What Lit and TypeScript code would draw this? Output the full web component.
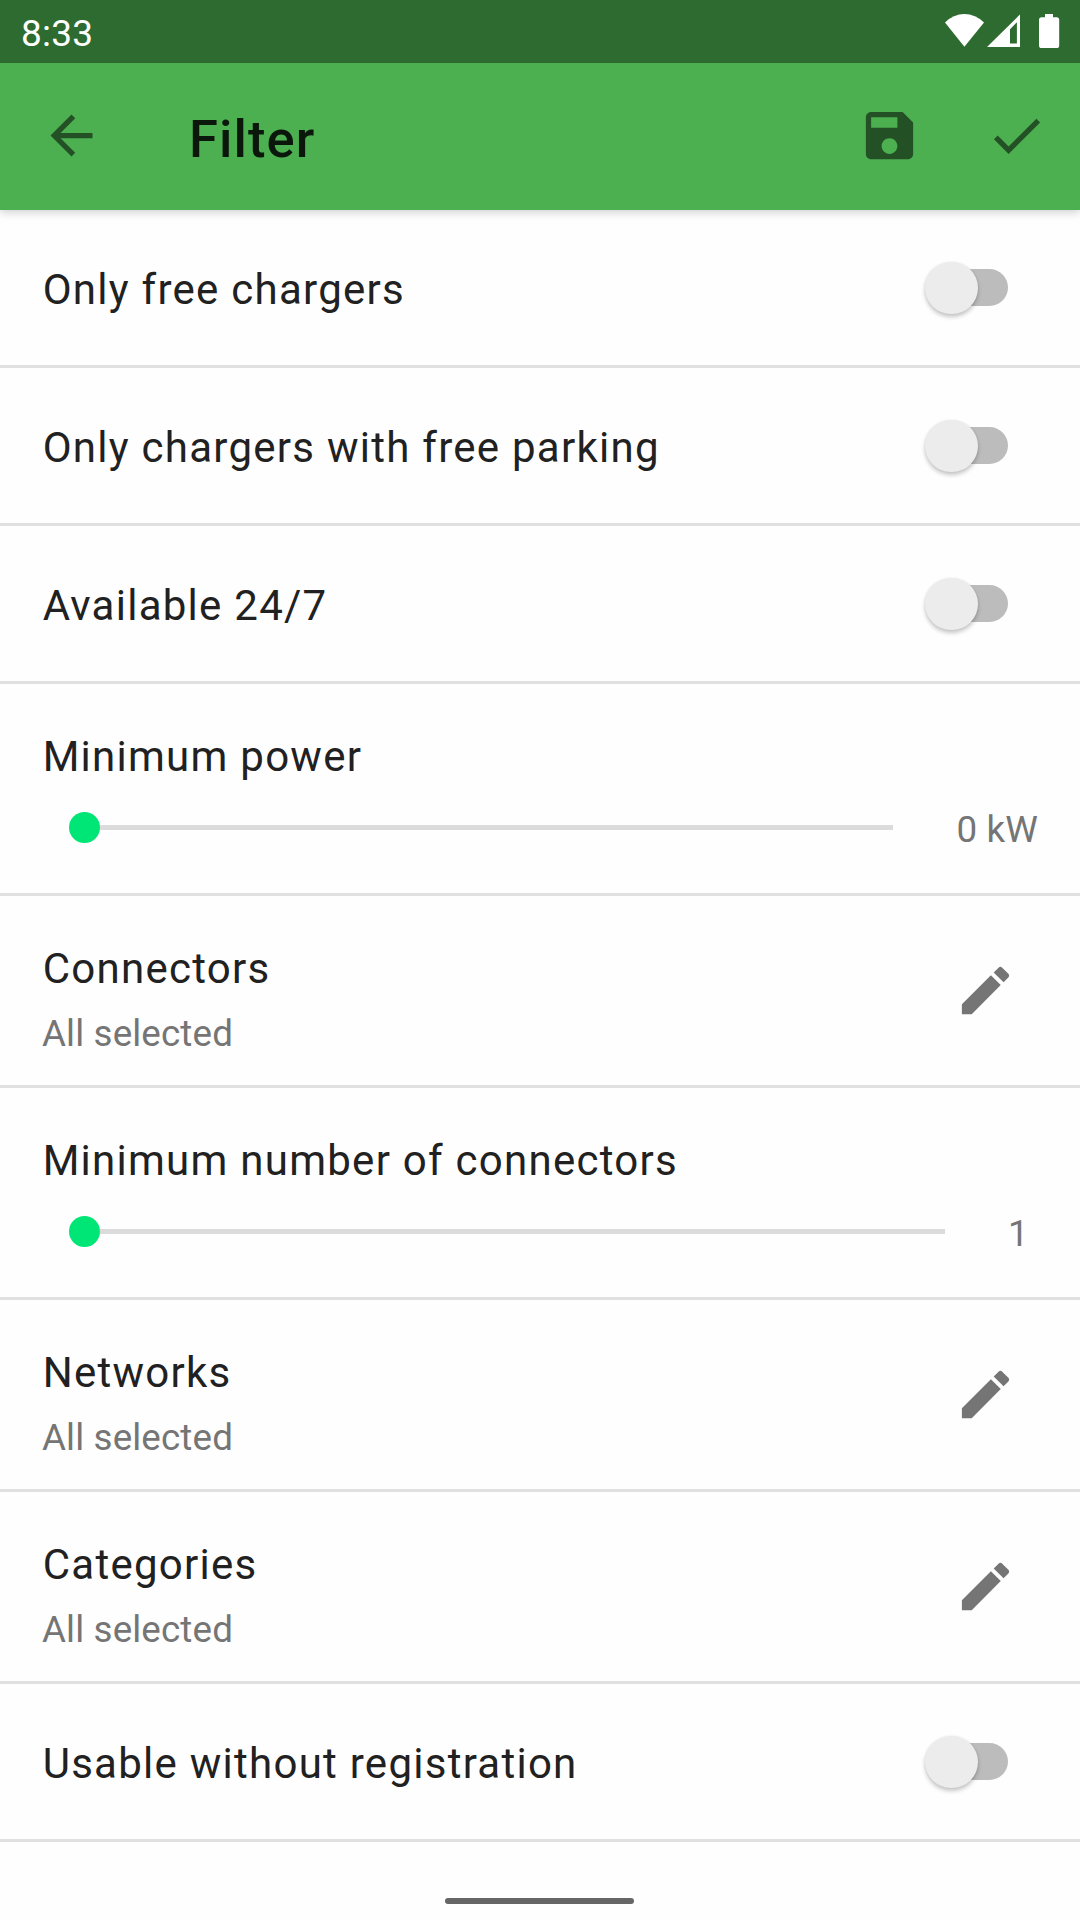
import { LitElement, html, svg, css } from "lit";
import { customElement, property } from "lit/decorators.js";

const ICONS = {
  back: svg`<path d="M20 11H7.83l5.59-5.59L12 4l-8 8 8 8 1.41-1.41L7.83 13H20v-2z"/>`,
  save: svg`<path d="M17 3H5c-1.11 0-2 .9-2 2v14c0 1.1.89 2 2 2h14c1.1 0 2-.9 2-2V7l-4-4zm-5 16c-1.66 0-3-1.34-3-3s1.34-3 3-3 3 1.34 3 3-1.34 3-3 3zm3-10H5V5h10v4z"/>`,
  check: svg`<path d="M9 16.17 4.83 12l-1.42 1.41L9 19 21 7l-1.41-1.41z"/>`,
  edit: svg`<path d="M3 17.25V21h3.75L17.81 9.94l-3.75-3.75L3 17.25zM20.71 7.04c.39-.39.39-1.02 0-1.41l-2.34-2.34c-.39-.39-1.02-.39-1.41 0l-1.83 1.83 3.75 3.75 1.83-1.83z"/>`,
};

@customElement("md-icon")
class MdIcon extends LitElement {
  @property() name: keyof typeof ICONS = "edit";
  static styles = css`
    :host { display: block; flex: none; width: 63px; height: 63px; }
    .icon { display: block; width: 100%; height: 100%; fill: currentColor; }
  `;
  render() {
    return html`<svg class="icon" viewBox="0 0 24 24">${ICONS[this.name]}</svg>`;
  }
}

@customElement("status-bar")
class StatusBar extends LitElement {
  static styles = css`
    :host {
      display: flex; justify-content: space-between; height: 63px;
      box-sizing: border-box; padding-left: 21px;
      background: #2e6b30; color: #fff;
    }
    .time { font-size: 37px; line-height: 67px; letter-spacing: 0.2px; }
    .icons { display: block; width: 140px; height: 63px; fill: #fff; }
  `;
  render() {
    return html`
      <span class="time">8:33</span>
      <svg class="icons" viewBox="940 0 140 63">
        <path d="M945 22.6Q953.4 14.1 964.4 14.1T984 22.6L964.4 46.8Z"/>
        <path fill-rule="evenodd" d="M987 47 1020 14.4V47ZM1010 29.2V43.5H1016.9V22.3Z"/>
        <path d="M1045 14h8v3.2h3.6a2.6 2.6 0 0 1 2.6 2.6V45.4a2.6 2.6 0 0 1-2.6 2.6h-15a2.6 2.6 0 0 1-2.6-2.6V19.8a2.6 2.6 0 0 1 2.6-2.6h3.4z"/>
      </svg>`;
  }
}

@customElement("app-bar")
class AppBar extends LitElement {
  static styles = css`
    :host {
      display: flex; align-items: center; height: 147px; box-sizing: border-box;
      padding: 0 32px 2px 39.7px; background: #4caf50; color: rgba(0, 0, 0, 0.54);
      box-shadow: 0 3px 8px rgba(0, 0, 0, 0.17);
      clip-path: inset(0 0 -16px 0);
    }
    .title {
      flex: 1; margin-left: 86.3px; padding-top: 6px;
      font-size: 52.5px; font-weight: 500; line-height: 62px;
      letter-spacing: 1.1px; color: rgba(0, 0, 0, 0.87);
    }
    .actions { display: flex; gap: 64px; }
  `;
  render() {
    return html`
      <md-icon name="back"></md-icon>
      <span class="title">Filter</span>
      <div class="actions">
        <md-icon name="save"></md-icon>
        <md-icon name="check"></md-icon>
      </div>`;
  }
}

const rowStyles = css`
  :host {
    display: flex; box-sizing: border-box; padding: 0 42px;
    border-bottom: 3px solid #e0e0e0;
  }
  .label {
    font-size: 42px; line-height: 50px; letter-spacing: 1.26px;
    padding-left: 0.7px; color: #212121; white-space: nowrap;
  }
  .minor {
    font-size: 36.75px; line-height: 44px; letter-spacing: 0.14px;
    color: #757575; white-space: nowrap;
  }
`;

@customElement("toggle-row")
class ToggleRow extends LitElement {
  @property() label = "";
  static styles = [rowStyles, css`
    :host { height: 158px; align-items: center; justify-content: space-between; padding-right: 72px; }
    .label { padding-top: 5px; }
    .track {
      display: flex; align-items: center; width: 74px; height: 37px;
      border-radius: 19px; background: #bcbcbc;
    }
    .thumb {
      width: 52.5px; height: 52.5px; margin: 1px 0 0 -8.8px; flex: none;
      border-radius: 50%; background: #ececec;
      box-shadow: 0 3px 4px rgba(0, 0, 0, 0.22), 0 0 3px rgba(0, 0, 0, 0.06);
    }
  `];
  render() {
    return html`
      <span class="label">${this.label}</span>
      <div class="track"><div class="thumb"></div></div>`;
  }
}

@customElement("slider-row")
class SliderRow extends LitElement {
  @property() label = "";
  @property() value = "";
  static styles = [rowStyles, css`
    :host { height: 212px; flex-direction: column; padding-top: 48px; }
    .control { display: flex; align-items: center; padding-left: 26.5px; margin-top: 21px; }
    .thumb { width: 31.5px; height: 31.5px; border-radius: 50%; background: #00e676; flex: none; }
    .track { flex: 1; height: 5px; background: #dbdbdb; margin-right: 63px; }
    .minor { min-width: 30px; padding-top: 5px; }
  `];
  render() {
    return html`
      <span class="label">${this.label}</span>
      <div class="control">
        <div class="thumb"></div>
        <div class="track"></div>
        <span class="minor">${this.value}</span>
      </div>`;
  }
}

@customElement("choice-row")
class ChoiceRow extends LitElement {
  @property() label = "";
  @property() summary = "";
  static styles = [rowStyles, css`
    :host { height: 192px; align-items: center; justify-content: space-between; padding-right: 63px; color: #757575; }
    .text { display: flex; flex-direction: column; gap: 18px; align-self: flex-start; padding-top: 48px; }
  `];
  render() {
    return html`
      <div class="text">
        <span class="label">${this.label}</span>
        <span class="minor">${this.summary}</span>
      </div>
      <md-icon name="edit"></md-icon>`;
  }
}

@customElement("app-root")
class AppRoot extends LitElement {
  static styles = css`
    :host {
      display: flex; flex-direction: column; width: 1080px; height: 1920px;
      overflow: hidden; background: #fefefe; font-family: Roboto, sans-serif;
    }
    .bar { z-index: 1; }
    .gesture { display: flex; flex: 1; justify-content: center; align-items: flex-end; padding: 0 1px 16px 0; }
    .handle { width: 189px; height: 6px; border-radius: 3px; background: #666; }
  `;
  render() {
    return html`
      <status-bar></status-bar>
      <app-bar class="bar"></app-bar>
      <toggle-row label="Only free chargers"></toggle-row>
      <toggle-row label="Only chargers with free parking"></toggle-row>
      <toggle-row label="Available 24/7"></toggle-row>
      <slider-row label="Minimum power" value="0 kW"></slider-row>
      <choice-row label="Connectors" summary="All selected"></choice-row>
      <slider-row label="Minimum number of connectors" value="1"></slider-row>
      <choice-row label="Networks" summary="All selected"></choice-row>
      <choice-row label="Categories" summary="All selected"></choice-row>
      <toggle-row label="Usable without registration"></toggle-row>
      <div class="gesture"><div class="handle"></div></div>`;
  }
}
